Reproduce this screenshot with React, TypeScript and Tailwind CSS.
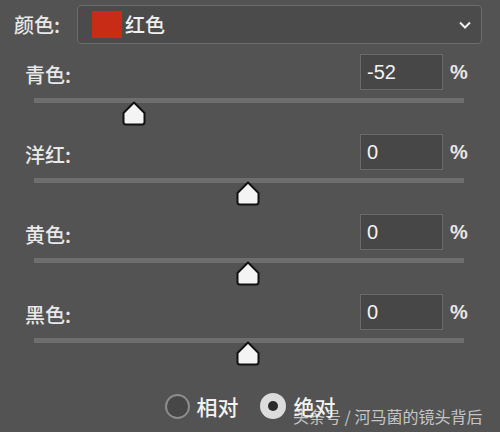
import React from "react";

const rows = [
  { label: "青色:", value: -52, x: 100 },
  { label: "洋红:", value: 0, x: 214 },
  { label: "黄色:", value: 0, x: 214 },
  { label: "黑色:", value: 0, x: 214 },
];

const cjk = { fontFamily: '"Noto Sans CJK SC", "Noto Sans", sans-serif' };
const num = { fontFamily: '"Liberation Sans", "Noto Sans", sans-serif' };

function Thumb({ x }: { x: number }) {
  return (
    <svg
      className="absolute top-[3px]"
      style={{ left: x - 13 }}
      width="26"
      height="25"
      viewBox="0 0 26 25"
    >
      <path
        d="M13 1.5 L23.5 12 L23.5 21 Q23.5 23.5 21 23.5 L5 23.5 Q2.5 23.5 2.5 21 L2.5 12 Z"
        fill="#f4f4f4"
        stroke="#111"
        strokeWidth="2"
        strokeLinejoin="round"
      />
    </svg>
  );
}

export default function App() {
  return (
    <div className="relative w-[500px] h-[432px] overflow-hidden bg-[#535353] text-[#e8e8e8]" style={cjk}>
      {/* top dropdown row */}
      <div className="flex items-center pt-[5px] pl-[14px] pr-[18px] h-[44px]">
        <div className="text-[20px] font-medium w-[63px] leading-none">颜色:</div>
        <div className="flex-1 h-[39px] rounded-[4px] border border-[#6c6c6c] bg-[#4b4b4b] flex items-center pl-[14px] pr-[9px]">
          <div className="w-[30px] h-[27px] bg-[#c92c16]" />
          <div className="ml-[3px] text-[20px] font-medium leading-none text-[#f0f0f0]">红色</div>
          <div className="flex-1" />
          <svg width="14" height="10" viewBox="0 0 14 10">
            <path d="M2 2.5 L7 7.5 L12 2.5" fill="none" stroke="#f0f0f0" strokeWidth="2" />
          </svg>
        </div>
      </div>

      {/* slider rows */}
      <div className="flex flex-col pt-[10px]">
        {rows.map((r) => (
          <div key={r.label} className="h-[80px] flex flex-col">
            <div className="flex items-center h-[36px] pl-[25px]">
              <div className="text-[20px] font-medium leading-none mt-[6px]">{r.label}</div>
              <div className="flex-1" />
              <div
                className="w-[83px] h-[36px] border border-[#6a6a6a] bg-[#474747] flex items-center pl-[6px] text-[20px] text-[#f2f2f2]"
                style={num}
              >
                {r.value}
              </div>
              <div className="w-[57px] pl-[7px] text-[20px] font-bold text-[#e6e6e6]" style={num}>
                %
              </div>
            </div>
            <div className="relative ml-[34px] w-[430px] mt-[8px] h-[5px] bg-[#6e6e6e]">
              <Thumb x={r.x} />
            </div>
          </div>
        ))}
      </div>

      {/* radios */}
      <div className="flex items-center justify-center gap-[21px] mt-[17px] h-[30px]">
        <div className="flex items-center gap-[7px]">
          <div className="w-[25px] h-[25px] rounded-full border-2 border-[#8c8c8c] bg-[#474747]" />
          <div className="text-[21px] font-medium leading-none text-[#f2f2f2]">相对</div>
        </div>
        <div className="flex items-center gap-[8px]">
          <div className="w-[26px] h-[26px] rounded-full bg-[#dcdcdc] flex items-center justify-center">
            <div className="w-[10px] h-[10px] rounded-full bg-[#2a2a2a]" />
          </div>
          <div className="text-[21px] font-medium leading-none text-[#f2f2f2]">绝对</div>
        </div>
      </div>

      {/* watermark */}
      <div className="absolute left-[293px] top-[408px] text-[16px] leading-none text-[#ececec]/75 whitespace-nowrap">
        头条号 / 河马菌的镜头背后
      </div>
    </div>
  );
}
